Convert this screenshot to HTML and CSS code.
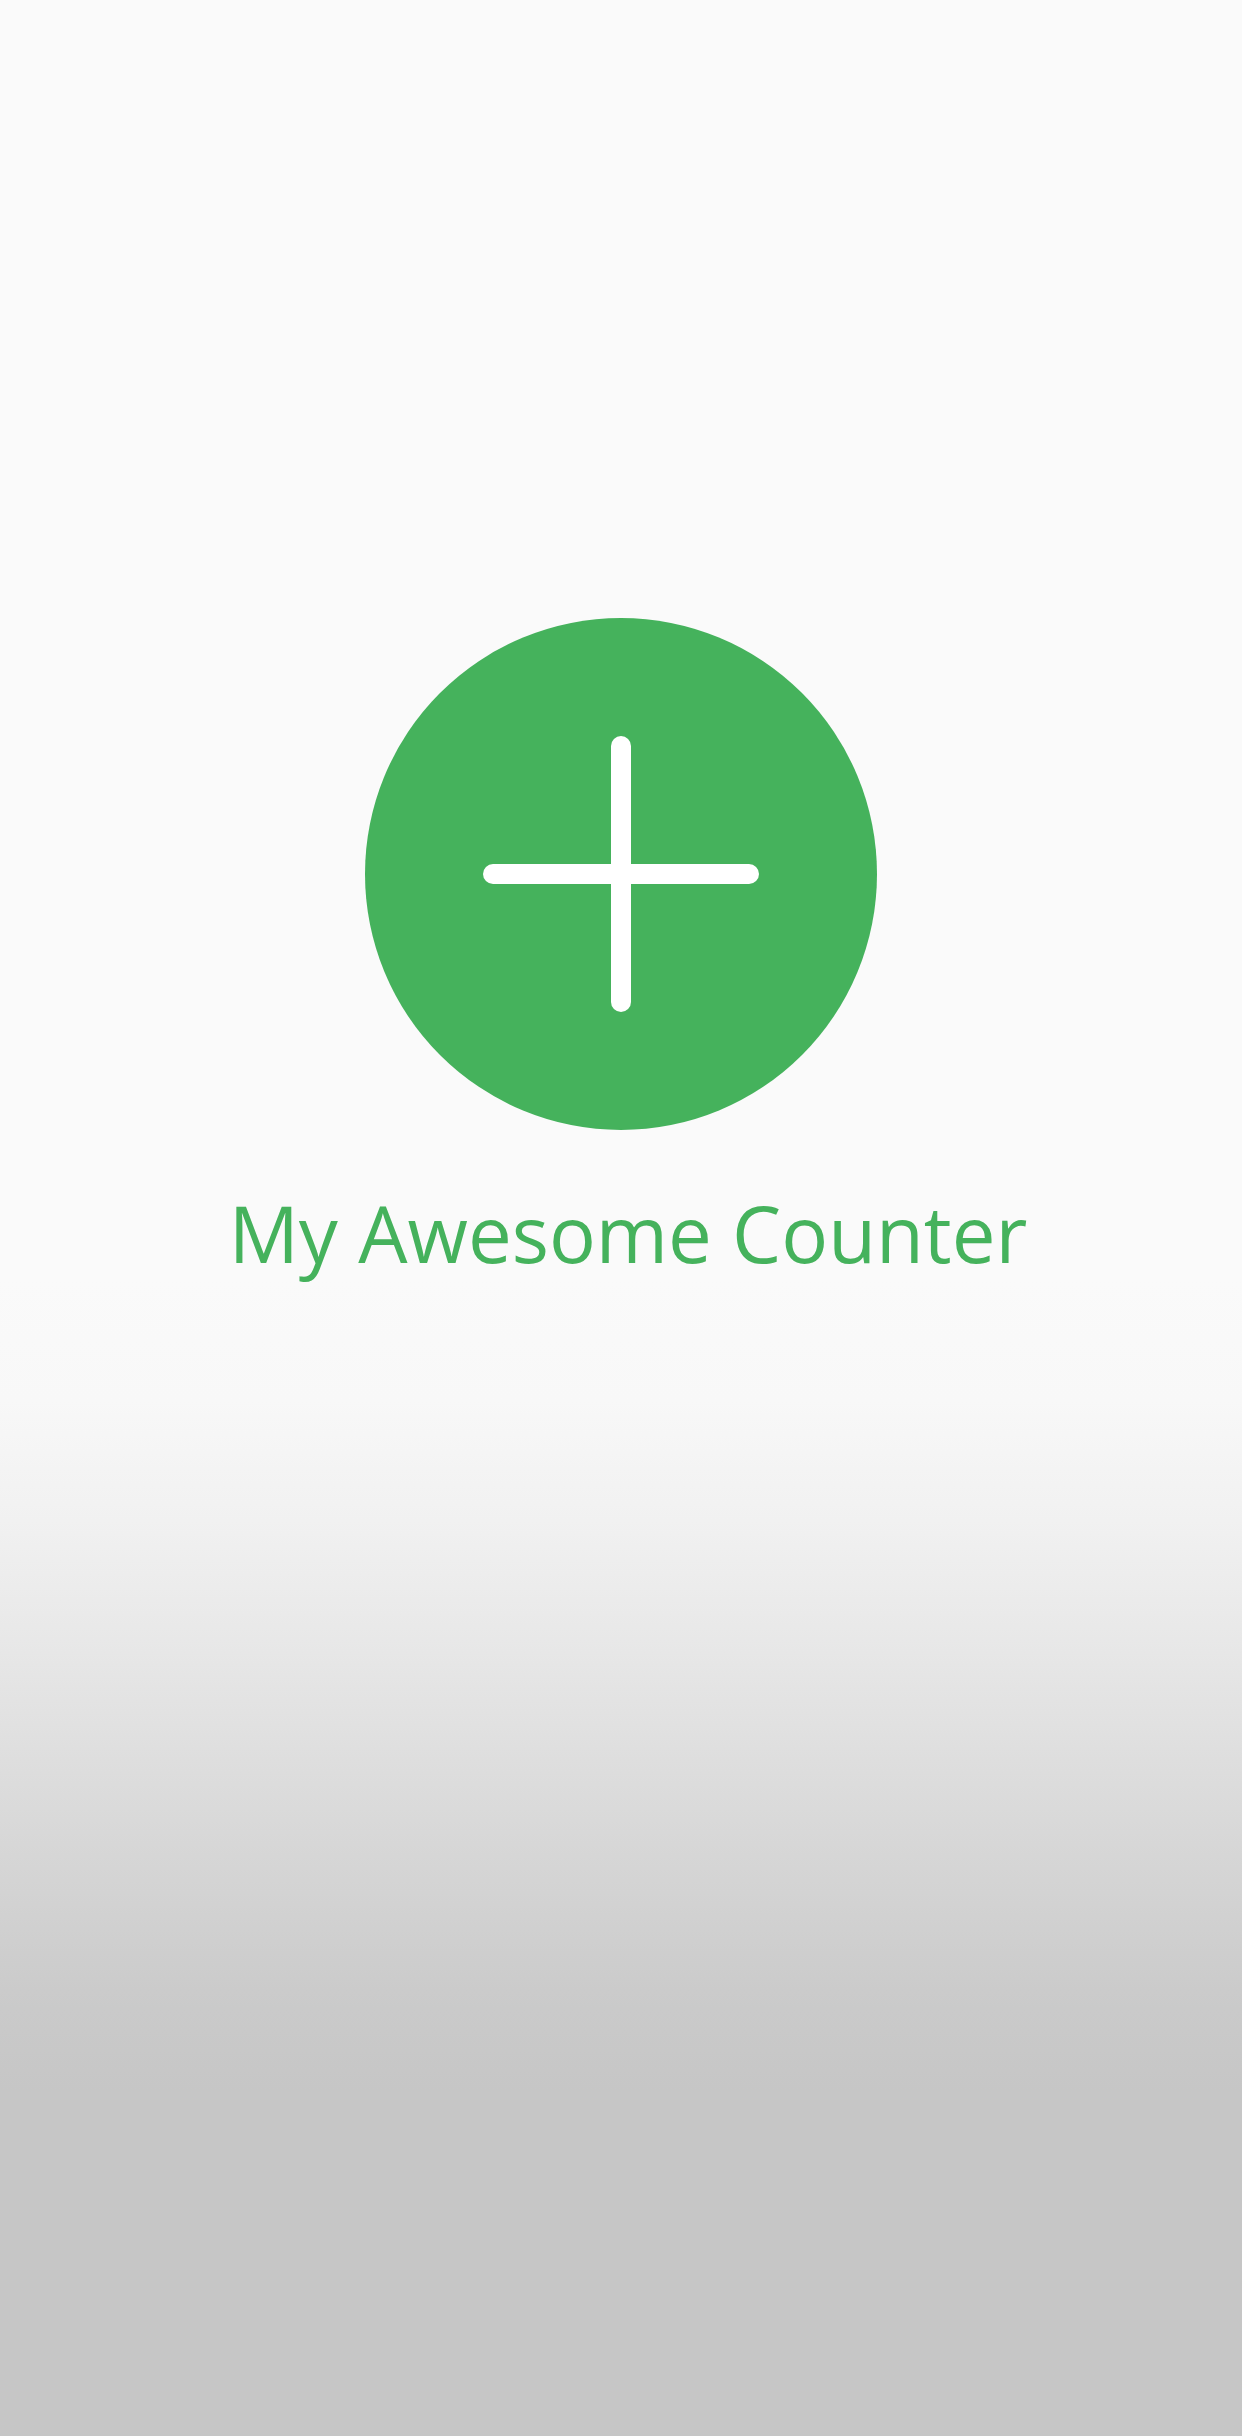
FILE: index.html
```html
<!DOCTYPE html>
<html lang="en">
<head>
<meta charset="utf-8">
<title>My Awesome Counter</title>
<link rel="stylesheet" href="styles.css">
</head>
<body>
  <main class="screen">
    <button class="add-button" type="button" aria-label="Add">
      <svg class="plus" viewBox="0 0 512 512" width="512" height="512" aria-hidden="true">
        <line x1="128" y1="256" x2="384" y2="256" />
        <line x1="256" y1="128" x2="256" y2="384" />
      </svg>
    </button>
    <h1 class="title">My Awesome Counter</h1>
  </main>
</body>
</html>
```

FILE: styles.css
```css
html, body {
  margin: 0;
  padding: 0;
}

body {
  width: 1242px;
  height: 2436px;
  background: #c6c6c6;
  font-family: "Open Sans", sans-serif;
}

.screen {
  box-sizing: border-box;
  height: 2436px;
  display: flex;
  flex-direction: column;
  align-items: center;
  padding-top: 618px;
  background: linear-gradient(to bottom,
    #fafafa 0px,
    #fafafa 1280px,
    #f8f8f8 1400px,
    #f1f1f1 1520px,
    #e8e8e8 1640px,
    #dedede 1760px,
    #d4d4d4 1880px,
    #cbcbcb 1990px,
    #c6c6c6 2090px,
    #c6c6c6 2436px);
}

.add-button {
  width: 512px;
  height: 512px;
  border: none;
  border-radius: 50%;
  background: #45b25c;
  padding: 0;
  display: flex;
  align-items: center;
  justify-content: center;
}

.plus {
  display: block;
}

.plus line {
  stroke: #ffffff;
  stroke-width: 20;
  stroke-linecap: round;
}

.title {
  margin: 57px 0 0;
  padding-left: 14px;
  font-family: "Open Sans", sans-serif;
  font-weight: 400;
  font-size: 78px;
  line-height: 1.2;
  color: #45b25c;
  letter-spacing: 0;
}
```
